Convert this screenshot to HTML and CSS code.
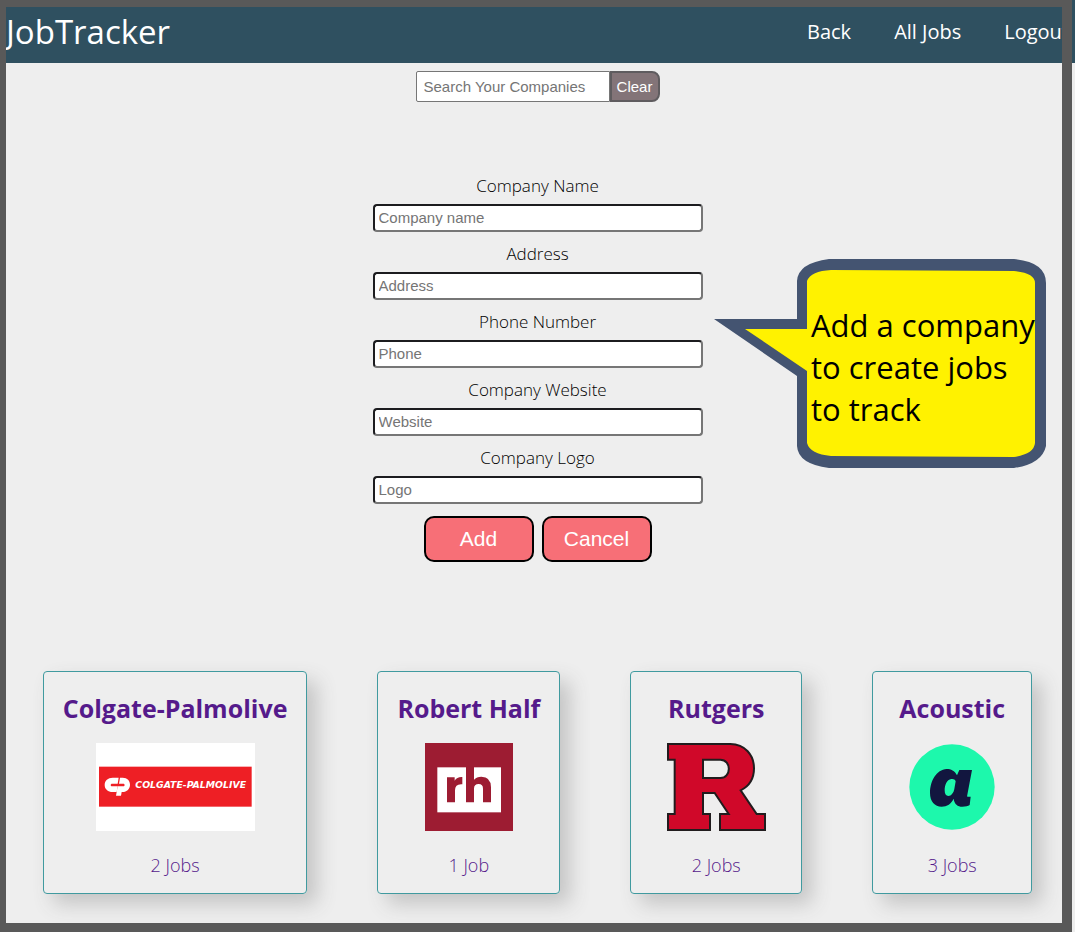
FILE: index.html
```html
<!DOCTYPE html>
<html lang="en">
<head>
<meta charset="utf-8">
<meta name="viewport" content="width=device-width, initial-scale=1">
<title>JobTracker</title>
<link rel="stylesheet" href="styles.css">
</head>
<body>
<header class="topbar">
  <h1 class="brand">JobTracker</h1>
  <nav class="nav">
    <a href="#back">Back</a>
    <a href="#jobs">All Jobs</a>
    <a href="#logout">Logout</a>
  </nav>
</header>

<main class="main">
  <form class="search" role="search">
    <input class="search-input" type="text" placeholder="Search Your Companies" aria-label="Search Your Companies">
    <button class="search-clear" type="reset">Clear</button>
  </form>

  <form class="company-form">
    <div class="field"><label for="name">Company Name</label><input id="name" type="text" placeholder="Company name"></div>
    <div class="field"><label for="address">Address</label><input id="address" type="text" placeholder="Address"></div>
    <div class="field"><label for="phone">Phone Number</label><input id="phone" type="text" placeholder="Phone"></div>
    <div class="field"><label for="website">Company Website</label><input id="website" type="text" placeholder="Website"></div>
    <div class="field"><label for="logo">Company Logo</label><input id="logo" type="text" placeholder="Logo"></div>
    <div class="actions">
      <button class="action" type="button">Add</button>
      <button class="action" type="button">Cancel</button>
    </div>
  </form>

  <section class="cards" aria-label="Companies">
    <a class="card" href="#colgate">
      <h2 class="card-title">Colgate-Palmolive</h2>
      <svg class="card-logo logo-wide" viewBox="198 249 477 264" aria-hidden="true">
        <rect x="198" y="249" width="477" height="264" fill="#fff"/>
        <rect x="207" y="320" width="458" height="120" fill="#ee1f25"/>
        <path fill="#fff" d="M266 353h-18c-14 0-24 9-24 22s10 21 24 21h12l3-17h-17c-5 0-5-8 0-8h17z"/>
        <path fill="#fff" d="M270 353h8c14 0 22 9 22 21s-9 22-23 22h-2l-2 11h-15l5-28h17c5 0 5-8 0-8h-13z"/>
        <text class="wordmark" x="316" y="385">COLGATE-PALMOLIVE</text>
      </svg>
      <p class="card-jobs">2 Jobs</p>
    </a>
    <a class="card" href="#roberthalf">
      <h2 class="card-title">Robert Half</h2>
      <svg class="card-logo logo-square" viewBox="195 249 264 264" aria-hidden="true">
        <rect x="195" y="249" width="264" height="264" fill="#9d1c32"/>
        <rect x="232" y="322" width="191" height="135" fill="#fff"/>
        <path fill="#9d1c32" d="M261 352h23v10q7-12 23-11v22q-22-2-22 18v36h-24z"/>
        <path fill="#9d1c32" d="M318 320h24v39q8-9 22-9 29 0 29 32v45h-24v-41q0-14-13-14-14 0-14 14v41h-24z"/>
      </svg>
      <p class="card-jobs">1 Job</p>
    </a>
    <a class="card" href="#rutgers">
      <h2 class="card-title">Rutgers</h2>
      <svg class="card-logo logo-block" viewBox="165 249 300 264" aria-hidden="true">
        <path fill="#d00829" fill-rule="evenodd" stroke="#211c1e" stroke-width="6" d="M171 252H358C402 252 429 286 429 325C429 355 414 379 389 391L437 462H462V510H327V462H353L311 399H276V462H297V510H171V462H191V299H171ZM276 299V354H328C362 354 362 299 328 299Z"/>
      </svg>
      <p class="card-jobs">2 Jobs</p>
    </a>
    <a class="card" href="#acoustic">
      <h2 class="card-title">Acoustic</h2>
      <svg class="card-logo logo-square" viewBox="174 249 264 264" aria-hidden="true">
        <circle cx="306" cy="381" r="128" fill="#1df8ac"/>
        <path fill="#12163f" fill-rule="evenodd" d="M366 330H328L321 346C314 332 303 327 290 327C259 329 240 363 240 399C240 424 254 440 275 440C291 440 304 431 311 416C313 432 323 440 337 440C347 440 354 438 359 435L362 410H354C351 410 351 408 352 404ZM317 364C315 358 310 356 304 357C290 358 284 376 284 391C284 402 288 408 295 408C304 408 311 398 313 387Z"/>
      </svg>
      <p class="card-jobs">3 Jobs</p>
    </a>
  </section>
</main>

<aside class="callout">
  <svg class="callout-shape" viewBox="0 0 332 209" aria-hidden="true">
    <path fill="#445471" d="M115 0H300Q332 3 332 24V187Q328 205 300 209H115Q84 205 83 187V117L0 60H83V22Q84 4 115 0Z"/>
    <path fill="#fff200" d="M117 11L300 12Q321 14 321 24V184Q320 195 300 198L117 197Q96 195 93 184V112L31 70H93V22Q97 12 117 11Z"/>
  </svg>
  <p class="callout-text">Add a company<br>to create jobs<br>to track</p>
</aside>
<div class="frame" aria-hidden="true"></div>
</body>
</html>
```
FILE: styles.css
```css
* {
  box-sizing: border-box;
}

body {
  position: relative;
  min-height: 100vh;
  margin: 0;
  overflow-x: hidden;
  background: #eeeeee;
  color: #000;
  font-family: "Segoe UI", "Open Sans", "Noto Sans", sans-serif;
}

h1, h2, p {
  margin: 0;
}

input, button {
  font-family: Arial, "Liberation Sans", sans-serif;
}

.topbar {
  display: flex;
  justify-content: space-between;
  align-items: center;
  padding: 4px 6px 3px;
  background: #2f5060;
  color: #fff;
}

.brand {
  font-size: 33px;
  font-weight: 400;
  line-height: 56px;
}

.nav {
  display: flex;
  gap: 43px;
}

.nav a {
  color: inherit;
  font-size: 20px;
  line-height: 28px;
  text-decoration: none;
}

.main {
  display: flex;
  flex-direction: column;
  align-items: center;
  padding: 8px 0 38px;
}

.search {
  display: flex;
}

.search-input {
  width: 194px;
  height: 31px;
  padding: 0 7px;
  border: 1px solid #767676;
  border-radius: 2px 0 0 2px;
  font-size: 15px;
}

.search-clear {
  width: 50px;
  padding: 0;
  border: 2px solid #5f5c5f;
  border-radius: 0 8px 8px 0;
  background: #837478;
  color: #fff;
  font-size: 15px;
}

.company-form {
  display: flex;
  flex-direction: column;
  gap: 10px;
  width: 330px;
  margin-top: 72px;
}

.field {
  display: flex;
  flex-direction: column;
  gap: 6px;
}

.field label {
  font-size: 17px;
  font-weight: 300;
  line-height: 24px;
  text-align: center;
}

.field input {
  height: 28px;
  padding: 0 4px 2px;
  border: 2px solid;
  border-color: #1c1c1f #767676 #767676 #1c1c1f;
  border-radius: 4px;
  font-size: 15px;
}

::placeholder {
  color: #757575;
}

.actions {
  display: flex;
  justify-content: center;
  gap: 8px;
  padding-top: 2px;
}

.action {
  width: 110px;
  height: 46px;
  padding: 0;
  border: 2px solid #000;
  border-radius: 10px;
  background: #f76f77;
  color: #fff;
  font-size: 21px;
}

.cards {
  display: flex;
  flex-wrap: wrap;
  justify-content: center;
  gap: 70px;
  margin-top: 109px;
}

.card {
  display: flex;
  flex-direction: column;
  align-items: center;
  padding: 19px 19px 16px;
  border: 1px solid #409a9f;
  border-radius: 4px;
  box-shadow: 10px 10px 20px #c4c4c4;
  color: #551a8b;
  text-decoration: none;
}

.card-title {
  font-size: 25px;
  font-weight: 700;
  line-height: 34px;
}

.card-logo {
  height: 88px;
  margin: 18px 16px 22px;
}

.logo-wide {
  width: 159px;
}

.logo-square {
  width: 88px;
}

.logo-block {
  width: 100px;
}

.wordmark {
  fill: #fff;
  font: italic 700 28px "DejaVu Sans", sans-serif;
}

.card-jobs {
  font-size: 18px;
  font-weight: 300;
  line-height: 24px;
}

.callout {
  position: absolute;
  top: 259px;
  right: 29px;
  width: 332px;
}

.callout-shape {
  display: block;
  width: 100%;
}

.callout-text {
  position: absolute;
  top: 45px;
  left: 97px;
  font-size: 31px;
  line-height: 42px;
  white-space: nowrap;
}

.frame {
  position: absolute;
  inset: 0 3px 0 0;
  border: solid #595959;
  border-width: 7px 10px 9px 6px;
  pointer-events: none;
}
```
